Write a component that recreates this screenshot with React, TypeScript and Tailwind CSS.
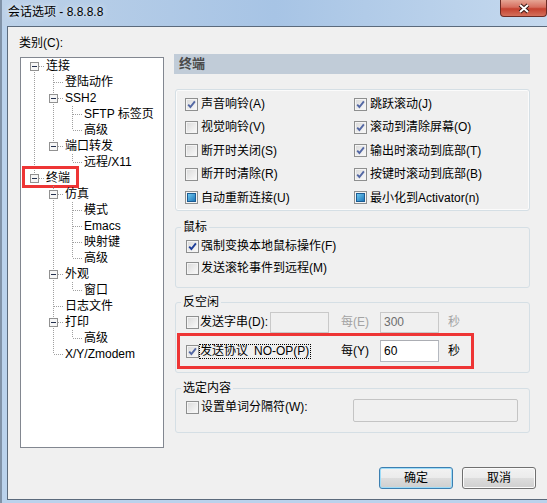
import type { ReactNode } from 'react';

type CheckState = 'off' | 'on' | 'dim' | 'mixed';
type Line = 'none' | 'pass' | 'mid' | 'end' | 'first';

const FONT = 'font-["Liberation_Sans","Noto_Sans_CJK_SC",sans-serif]';

function CheckBox({ state }: { state: CheckState }) {
  return (
    <span className="relative block w-[13px] h-[13px] shrink-0 border border-[#8e8f8f] bg-gradient-to-br from-[#d9d9d9] to-[#fbfbfb] shadow-[inset_0_0_0_1px_#f4f4f4]">
      {(state === 'on' || state === 'dim') && (
        <svg className="absolute left-0 top-0" width="11" height="11" viewBox="0 0 11 11">
          <path
            d="M2.2 5.6 L4.4 8 L8.9 2.3"
            fill="none"
            stroke={state === 'on' ? '#1f3f99' : '#5468a4'}
            strokeWidth="1.9"
          />
        </svg>
      )}
      {state === 'mixed' && (
        <span className="absolute left-[1px] top-[1px] w-[9px] h-[9px] border border-[#1b5c93] bg-gradient-to-br from-[#6cc6ee] to-[#1d78b9]" />
      )}
    </span>
  );
}

function Check({ state, label, gap = 'gap-[3px]' }: { state: CheckState; label: ReactNode; gap?: string }) {
  return (
    <div className={`flex items-center h-[22px] ${gap}`}>
      <CheckBox state={state} />
      <span className="text-[12px] leading-[16px] whitespace-nowrap">{label}</span>
    </div>
  );
}

function TreeCell({ kind, exp }: { kind: Line; exp: boolean }) {
  const dot = { stroke: '#a0a0a0', strokeDasharray: '1 1', strokeWidth: 1 };
  return (
    <svg width="19" height="16" className="shrink-0 block">
      {(kind === 'pass' || kind === 'mid') && <line x1="9.5" y1="0" x2="9.5" y2="16" {...dot} />}
      {kind === 'end' && <line x1="9.5" y1="0" x2="9.5" y2="8" {...dot} />}
      {kind === 'first' && <line x1="9.5" y1="8" x2="9.5" y2="16" {...dot} />}
      {kind !== 'none' && kind !== 'pass' && <line x1="10" y1="8.5" x2="19" y2="8.5" {...dot} />}
      {exp && (
        <>
          <rect x="5.5" y="4.5" width="8" height="8" fill="#f6f6f6" stroke="#919191" />
          <line x1="7" y1="8.5" x2="12" y2="8.5" stroke="#23304d" />
        </>
      )}
    </svg>
  );
}

const tree: { label: string; cols: Line[]; exp?: boolean; mark?: boolean }[] = [
  { label: '连接', cols: ['first'], exp: true },
  { label: '登陆动作', cols: ['pass', 'mid'] },
  { label: 'SSH2', cols: ['pass', 'mid'], exp: true },
  { label: 'SFTP 标签页', cols: ['pass', 'pass', 'mid'] },
  { label: '高级', cols: ['pass', 'pass', 'end'] },
  { label: '端口转发', cols: ['pass', 'end'], exp: true },
  { label: '远程/X11', cols: ['pass', 'none', 'end'] },
  { label: '终端', cols: ['end'], exp: true, mark: true },
  { label: '仿真', cols: ['none', 'mid'], exp: true },
  { label: '模式', cols: ['none', 'pass', 'mid'] },
  { label: 'Emacs', cols: ['none', 'pass', 'mid'] },
  { label: '映射键', cols: ['none', 'pass', 'mid'] },
  { label: '高级', cols: ['none', 'pass', 'end'] },
  { label: '外观', cols: ['none', 'mid'], exp: true },
  { label: '窗口', cols: ['none', 'pass', 'end'] },
  { label: '日志文件', cols: ['none', 'mid'] },
  { label: '打印', cols: ['none', 'mid'], exp: true },
  { label: '高级', cols: ['none', 'pass', 'end'] },
  { label: 'X/Y/Zmodem', cols: ['none', 'end'] },
];

const terminalOpts: [CheckState, string][] = [
  ['dim', '声音响铃(A)'],
  ['dim', '跳跃滚动(J)'],
  ['off', '视觉响铃(V)'],
  ['dim', '滚动到清除屏幕(O)'],
  ['off', '断开时关闭(S)'],
  ['dim', '输出时滚动到底部(T)'],
  ['off', '断开时清除(R)'],
  ['dim', '按键时滚动到底部(B)'],
  ['mixed', '自动重新连接(U)'],
  ['mixed', '最小化到Activator(n)'],
];

function Btn({ children, primary }: { children: ReactNode; primary?: boolean }) {
  return (
    <button
      className={`w-[74px] h-[22px] rounded-[3px] border text-[12px] leading-[16px] text-black bg-[linear-gradient(to_bottom,#f2f2f2_0%,#ebebeb_50%,#dddddd_51%,#cfcfcf_100%)] ${
        primary
          ? 'border-[#3c7fb1] shadow-[inset_0_0_0_1px_#9edcf8]'
          : 'border-[#707070] shadow-[inset_0_0_0_1px_#fbfbfb]'
      }`}
    >
      {children}
    </button>
  );
}

export default function App() {
  return (
    <div className={`w-[547px] h-[503px] overflow-hidden bg-[#bad2ec] border-l-[2px] border-[#8193a8] text-black ${FONT}`}>
      <div className="h-[26px] flex items-start bg-gradient-to-r from-[#bcd1e8] via-[#a7c4e5] to-[#c5d9ee]">
        <span className="ml-[6px] mt-[4px] text-[12px] leading-[16px] [text-shadow:0_0_6px_#ffffff]">会话选项 - 8.8.8.8</span>
        <div className="ml-auto w-[47px] h-[17px] flex items-center justify-center rounded-b-[4px] border border-t-0 border-[#6d2b24] bg-[linear-gradient(to_bottom,#e6a594_0%,#d66e5e_45%,#c4412f_55%,#d4705c_100%)]">
          <svg width="14" height="11" viewBox="0 0 14 11">
            <path d="M3 2 L11 9 M11 2 L3 9" stroke="#3b1814" strokeWidth="4" />
            <path d="M3 2 L11 9 M11 2 L3 9" stroke="#ffffff" strokeWidth="2" />
          </svg>
        </div>
      </div>

      <div className="ml-[5px] h-[474px] border-l border-t border-b border-[#5b6a7c] bg-[#f0f0f0]">
        <div className="flex pl-[12px]">
          <div className="w-[144px] pt-[8px]">
            <div className="-ml-[1px] text-[12px] leading-[16px]">类别(C):</div>
            <div className="mt-[6px] h-[391px] border border-[#828790] bg-white pl-[4px]">
              {tree.map((row, i) => (
                <div key={i} className="relative flex h-[16px]">
                  {row.cols.map((c, j) => (
                    <TreeCell key={j} kind={c} exp={!!row.exp && j === row.cols.length - 1} />
                  ))}
                  <span className="ml-[2px] text-[12px] leading-[16px] whitespace-nowrap">{row.label}</span>
                  {row.mark && (
                    <span className="absolute left-[-3px] top-[-4px] w-[57px] h-[22px] border-[3px] border-[#ee3535]" />
                  )}
                </div>
              ))}
            </div>
          </div>

          <div className="ml-[10px] w-[356px] pt-[27px]">
            <div className="h-[20px] bg-[#c1ccd8] pl-[5px] text-[13px] font-bold leading-[20px] text-[#4a4a4a]">终端</div>

            <div className="mt-[15px] ml-[1px] w-[355px] h-[122px] rounded-[3px] border border-[#d5dfe5] shadow-[inset_0_0_0_1px_#fbfbfb] pt-[3px] pl-[9px] grid grid-cols-[169px_1fr]">
              {terminalOpts.map(([s, l], i) => (
                <Check key={i} state={s} label={l} />
              ))}
            </div>

            <fieldset className="mt-[8px] ml-[1px] w-[355px] h-[69px] rounded-[3px] border border-[#d5dfe5]">
              <legend className="ml-[5px] px-[2px] text-[12px] leading-[16px]">鼠标</legend>
              <div className="pl-[10px]">
                <Check state="on" label="强制变换本地鼠标操作(F)" gap="gap-[2px]" />
                <Check state="off" label="发送滚轮事件到远程(M)" gap="gap-[2px]" />
              </div>
            </fieldset>

            <fieldset className="mt-[6px] ml-[1px] w-[355px] h-[79px] rounded-[3px] border border-[#d5dfe5]">
              <legend className="ml-[5px] px-[2px] text-[12px] leading-[16px]">反空闲</legend>
              <div className="flex items-center h-[24px] pl-[10px] text-[12px] leading-[16px]">
                <div className="w-[84px] flex items-center gap-[1px]">
                  <CheckBox state="off" />
                  <span className="whitespace-nowrap">发送字串(D):</span>
                </div>
                <div className="w-[59px] h-[21px] border border-[#c9c9c9] bg-[#f0f0f0]" />
                <span className="w-[51px] pl-[12px] text-[#a3a3a3]">每(E)</span>
                <div className="w-[59px] h-[21px] border border-[#c9c9c9] bg-[#f0f0f0] pl-[3px] leading-[19px] text-[#6d6d6d]">300</div>
                <span className="pl-[9px] text-[#a3a3a3]">秒</span>
              </div>
              <div className="relative flex items-center h-[34px] pl-[10px] text-[12px] leading-[16px]">
                <div className="w-[143px] flex items-center">
                  <CheckBox state="dim" />
                  <span className="whitespace-nowrap border border-dotted border-black pl-[0px] pr-[1px] leading-[13px]">
                    发送协议<span className="ml-[6px]">NO-OP(P)</span>
                  </span>
                </div>
                <span className="w-[51px] pl-[12px]">每(Y)</span>
                <div className="w-[59px] h-[22px] border border-[#b5b9c0] border-t-[#abadb3] bg-white pl-[3px] leading-[20px]">60</div>
                <span className="pl-[9px]">秒</span>
                <span className="absolute left-[1px] top-[-1px] w-[297px] h-[36px] border-[3px] border-[#ee3535]" />
              </div>
            </fieldset>

            <fieldset className="mt-[7px] ml-[1px] w-[355px] h-[53px] rounded-[3px] border border-[#d5dfe5]">
              <legend className="ml-[5px] px-[2px] text-[12px] leading-[16px]">选定内容</legend>
              <div className="flex items-start pl-[10px] text-[12px]">
                <div className="mt-[4px] h-[14px] flex items-center gap-[2px]">
                  <CheckBox state="off" />
                  <span className="whitespace-nowrap leading-[16px]">设置单词分隔符(W):</span>
                </div>
                <div className="ml-auto mr-[11px] mt-[3px] w-[165px] h-[23px] rounded-[2px] border border-[#c4c4c4] bg-[#f0f0f0]" />
              </div>
            </fieldset>
          </div>
        </div>

        <div className="mt-[19px] flex justify-end gap-[9px] pr-[11px]">
          <Btn primary>确定</Btn>
          <Btn>取消</Btn>
        </div>
      </div>
    </div>
  );
}
